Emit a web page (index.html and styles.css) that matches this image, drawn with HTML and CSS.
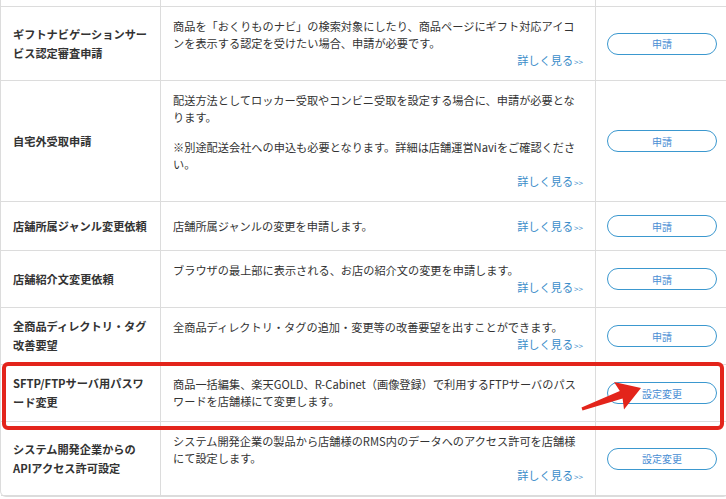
FILE: index.html
```html
<!DOCTYPE html>
<html lang="ja">
<head>
  <meta charset="UTF-8">
  <meta name="viewport" content="width=device-width, initial-scale=1">
  <title>申請・設定変更</title>
  <link rel="stylesheet" href="styles.css">
</head>
<body>
  <div class="apply-list">
    <div class="row stub">
      <div class="cell"></div>
      <div class="cell"></div>
      <div class="cell"></div>
    </div>

    <div class="row">
      <div class="cell title">ギフトナビゲーションサービス認定審査申請</div>
      <div class="cell desc">
        <div class="desc-body">
          <p>商品を「おくりものナビ」の検索対象にしたり、商品ページにギフト対応アイコンを表示する認定を受けたい場合、申請が必要です。</p>
          <a class="more" href="#">詳しく見る<small>&gt;&gt;</small></a>
        </div>
      </div>
      <div class="cell action"><button type="button" class="pill">申請</button></div>
    </div>

    <div class="row">
      <div class="cell title">自宅外受取申請</div>
      <div class="cell desc">
        <div class="desc-body">
          <p>配送方法としてロッカー受取やコンビニ受取を設定する場合に、申請が必要となります。</p>
          <p class="note">※別途配送会社への申込も必要となります。詳細は店舗運営Naviをご確認ください。</p>
          <a class="more" href="#">詳しく見る<small>&gt;&gt;</small></a>
        </div>
      </div>
      <div class="cell action"><button type="button" class="pill">申請</button></div>
    </div>

    <div class="row">
      <div class="cell title">店舗所属ジャンル変更依頼</div>
      <div class="cell desc">
        <div class="desc-body one-line">
          <p>店舗所属ジャンルの変更を申請します。</p>
          <a class="more" href="#">詳しく見る<small>&gt;&gt;</small></a>
        </div>
      </div>
      <div class="cell action"><button type="button" class="pill">申請</button></div>
    </div>

    <div class="row">
      <div class="cell title">店舗紹介文変更依頼</div>
      <div class="cell desc">
        <div class="desc-body">
          <p>ブラウザの最上部に表示される、お店の紹介文の変更を申請します。</p>
          <a class="more" href="#">詳しく見る<small>&gt;&gt;</small></a>
        </div>
      </div>
      <div class="cell action"><button type="button" class="pill">申請</button></div>
    </div>

    <div class="row">
      <div class="cell title">全商品ディレクトリ・タグ改善要望</div>
      <div class="cell desc">
        <div class="desc-body">
          <p>全商品ディレクトリ・タグの追加・変更等の改善要望を出すことができます。</p>
          <a class="more" href="#">詳しく見る<small>&gt;&gt;</small></a>
        </div>
      </div>
      <div class="cell action"><button type="button" class="pill">申請</button></div>
    </div>

    <div class="row">
      <div class="cell title">SFTP/FTPサーバ用パスワード変更</div>
      <div class="cell desc">
        <div class="desc-body">
          <p>商品一括編集、楽天GOLD、R-Cabinet（画像登録）で利用するFTPサーバのパスワードを店舗様にて変更します。</p>
        </div>
      </div>
      <div class="cell action"><button type="button" class="pill">設定変更</button></div>
    </div>

    <div class="row">
      <div class="cell title">システム開発企業からのAPIアクセス許可設定</div>
      <div class="cell desc">
        <div class="desc-body">
          <p>システム開発企業の製品から店舗様のRMS内のデータへのアクセス許可を店舗様にて設定します。</p>
          <a class="more" href="#">詳しく見る<small>&gt;&gt;</small></a>
        </div>
      </div>
      <div class="cell action"><button type="button" class="pill">設定変更</button></div>
    </div>

    <!-- annotation drawn over the screenshot -->
    <div class="mark"></div>
    <svg class="arrow" width="726" height="499" viewBox="0 0 726 499">
      <polygon fill="#e3241b" points="581.5,407.6 582.5,410.4 622.6,398.6 624,409.5 641,388 614,382 619.8,391"/>
    </svg>
  </div>
</body>
</html>
```

FILE: styles.css
```css
* {
  margin: 0;
  padding: 0;
  box-sizing: border-box;
}

body {
  background: #fff;
  color: #333;
  font-family: "Noto Sans CJK JP", "Noto Sans", sans-serif;
  font-size: 11.2px;
  overflow: hidden;
}

.apply-list {
  position: relative;
  width: 729px;
  border: 1px solid #dcdcdc;
  border-top: none;
  border-radius: 0 0 6px 6px;
}

.row {
  display: grid;
  grid-template-columns: 159px 435px 1fr;
  border-bottom: 1px solid #dcdcdc;
}

.row:last-of-type {
  border-bottom: none;
}

.cell + .cell {
  border-left: 1px solid #dcdcdc;
}

.stub {
  height: 7px;
}

.cell {
  display: flex;
  align-items: center;
  padding: 11px 12px;
}

.stub .cell {
  padding: 0;
}

.title {
  font-weight: bold;
  line-height: 19px;
  padding: 8px 12px;
}

.desc {
  line-height: 17px;
}

.desc-body {
  width: 100%;
}

.note {
  margin-top: 13px;
}

.more {
  display: block;
  height: 17px;
  text-align: right;
  color: #3a8cc9;
  text-decoration: none;
}

.more small {
  font-size: 8px;
  line-height: 1;
  margin-left: 1px;
}

.one-line {
  display: flex;
  justify-content: space-between;
}

.action {
  justify-content: center;
  padding: 13px 0;
}

.pill {
  width: 110px;
  height: 22px;
  background: #fff;
  border: 1px solid #3b98cf;
  border-radius: 11px;
  color: #4a8ed4;
  font-family: inherit;
  font-size: 10px;
  cursor: pointer;
}

.mark {
  position: absolute;
  left: 1px;
  top: 362px;
  width: 722px;
  height: 68px;
  border: 4px solid #e3241b;
  border-radius: 6px;
}

.arrow {
  position: absolute;
  left: -1px;
  top: 0;
  pointer-events: none;
}
```
